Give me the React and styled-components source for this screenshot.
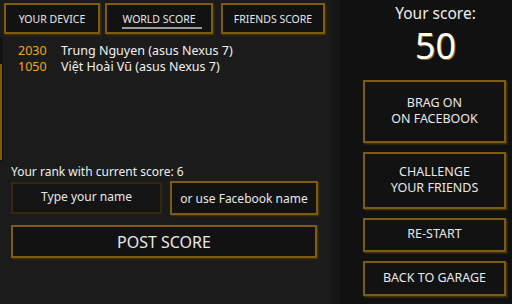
import React from "react";
import styled, { createGlobalStyle } from "styled-components";

const GlobalStyle = createGlobalStyle`
  html, body {
    margin: 0;
    padding: 0;
    background: #111;
  }
  body {
    font-family: "Noto Sans", "Open Sans", sans-serif;
    color: #eee;
  }
`;

const Screen = styled.div`
  width: 512px;
  height: 304px;
  display: flex;
  overflow: hidden;
`;

const LeftPanel = styled.div`
  width: 330px;
  background: #1b1b1b;
  display: flex;
  flex-direction: column;
  padding-top: 3px;
  box-sizing: border-box;
`;

const Divider = styled.div`
  width: 10px;
  background: #161616;
`;

const RightPanel = styled.div`
  flex: 1;
  background: #111;
  display: flex;
  flex-direction: column;
  align-items: stretch;
  padding: 0 6px 0 23px;
`;

const goldBox = `
  box-sizing: border-box;
  background: #121212;
  border: 2px solid #7d5c12;
  box-shadow: 1px 1px 0 #3f2f0c, 2px 2px 0 #2a2009;
  color: #e8e8e8;
  display: flex;
  align-items: center;
  justify-content: center;
  text-align: center;
`;

const TabRow = styled.div`
  display: flex;
  padding-left: 4px;
`;

const Tab = styled.div`
  ${goldBox}
  width: ${p => p.w}px;
  margin-right: ${p => p.gap}px;
  height: 31px;
  font-size: 10.5px;
  position: relative;
  padding-top: 1px;

  &::after {
    content: "";
    display: ${p => (p.active ? "block" : "none")};
    position: absolute;
    left: 15px;
    right: 9px;
    bottom: 3px;
    height: 2px;
    background: #9a9a9a;
  }
`;

const ListArea = styled.div`
  position: relative;
  height: 130px;
  padding: 9px 0 0 18px;
  box-sizing: border-box;
`;

const ScrollTrack = styled.div`
  position: absolute;
  left: 0;
  top: 3px;
  width: 3px;
  height: 124px;
  background: #121212;
`;

const ScrollThumb = styled.div`
  position: absolute;
  left: 0;
  top: 30px;
  width: 2px;
  height: 96px;
  background: #7d5c12;
`;

const ScoreRow = styled.div`
  display: flex;
  font-size: 12.5px;
  line-height: 16px;
`;

const Points = styled.span`
  width: 43px;
  color: #f2a81d;
`;

const Player = styled.span`
  color: #f0f0f0;
`;

const RankText = styled.div`
  font-size: 12px;
  padding-left: 11px;
  line-height: 16px;
`;

const NameRow = styled.div`
  display: flex;
  gap: 8px;
  padding-left: 11px;
  margin-top: 1px;
`;

const NameInput = styled.div`
  box-sizing: border-box;
  width: 151px;
  height: 32px;
  margin-top: 1px;
  border: 2px solid #33270d;
  background: #141414;
  display: flex;
  align-items: center;
  justify-content: center;
  font-size: 12px;
  padding-bottom: 3px;
  color: #e8e8e8;
`;

const FbButton = styled.div`
  ${goldBox}
  width: 148px;
  height: 34px;
  font-size: 12px;
`;

const PostButton = styled.div`
  ${goldBox}
  margin: 10px 0 0 11px;
  width: 306px;
  height: 33px;
  font-size: 16px;
`;

const ScoreLabel = styled.div`
  text-align: center;
  font-size: 15.5px;
  margin-top: 3px;
  line-height: 20px;
  height: 20px;
  padding-left: 2px;
`;

const ScoreValue = styled.div`
  text-align: center;
  font-size: 36px;
  line-height: 36px;
  height: 36px;
  margin-top: 5px;
  color: #fff;
  text-shadow: 1px 1px 0 #8a6416;
  padding-left: 2px;
`;

const SideButton = styled.div`
  ${goldBox}
  height: ${p => p.h}px;
  margin-top: ${p => p.top}px;
  font-size: 12.5px;
  line-height: 16px;
  padding-bottom: 2px;
`;

export default function App() {
  return (
    <>
      <GlobalStyle />
      <Screen>
        <LeftPanel>
          <TabRow>
            <Tab w={96} gap={5}>YOUR DEVICE</Tab>
            <Tab w={108} gap={8} active>WORLD SCORE</Tab>
            <Tab w={104} gap={0}>FRIENDS SCORE</Tab>
          </TabRow>
          <ListArea>
            <ScrollTrack />
            <ScrollThumb />
            <ScoreRow>
              <Points>2030</Points>
              <Player>Trung Nguyen (asus Nexus 7)</Player>
            </ScoreRow>
            <ScoreRow>
              <Points>1050</Points>
              <Player>Việt Hoài Vũ (asus Nexus 7)</Player>
            </ScoreRow>
          </ListArea>
          <RankText>Your rank with current score: 6</RankText>
          <NameRow>
            <NameInput>Type your name</NameInput>
            <FbButton>or use Facebook name</FbButton>
          </NameRow>
          <PostButton>POST SCORE</PostButton>
        </LeftPanel>
        <Divider />
        <RightPanel>
          <ScoreLabel>Your score:</ScoreLabel>
          <ScoreValue>50</ScoreValue>
          <SideButton h={63} top={16}>
            BRAG ON
            <br />
            ON FACEBOOK
          </SideButton>
          <SideButton h={57} top={9}>
            CHALLENGE
            <br />
            YOUR FRIENDS
          </SideButton>
          <SideButton h={34} top={9}>RE-START</SideButton>
          <SideButton h={35} top={9}>BACK TO GARAGE</SideButton>
        </RightPanel>
      </Screen>
    </>
  );
}
